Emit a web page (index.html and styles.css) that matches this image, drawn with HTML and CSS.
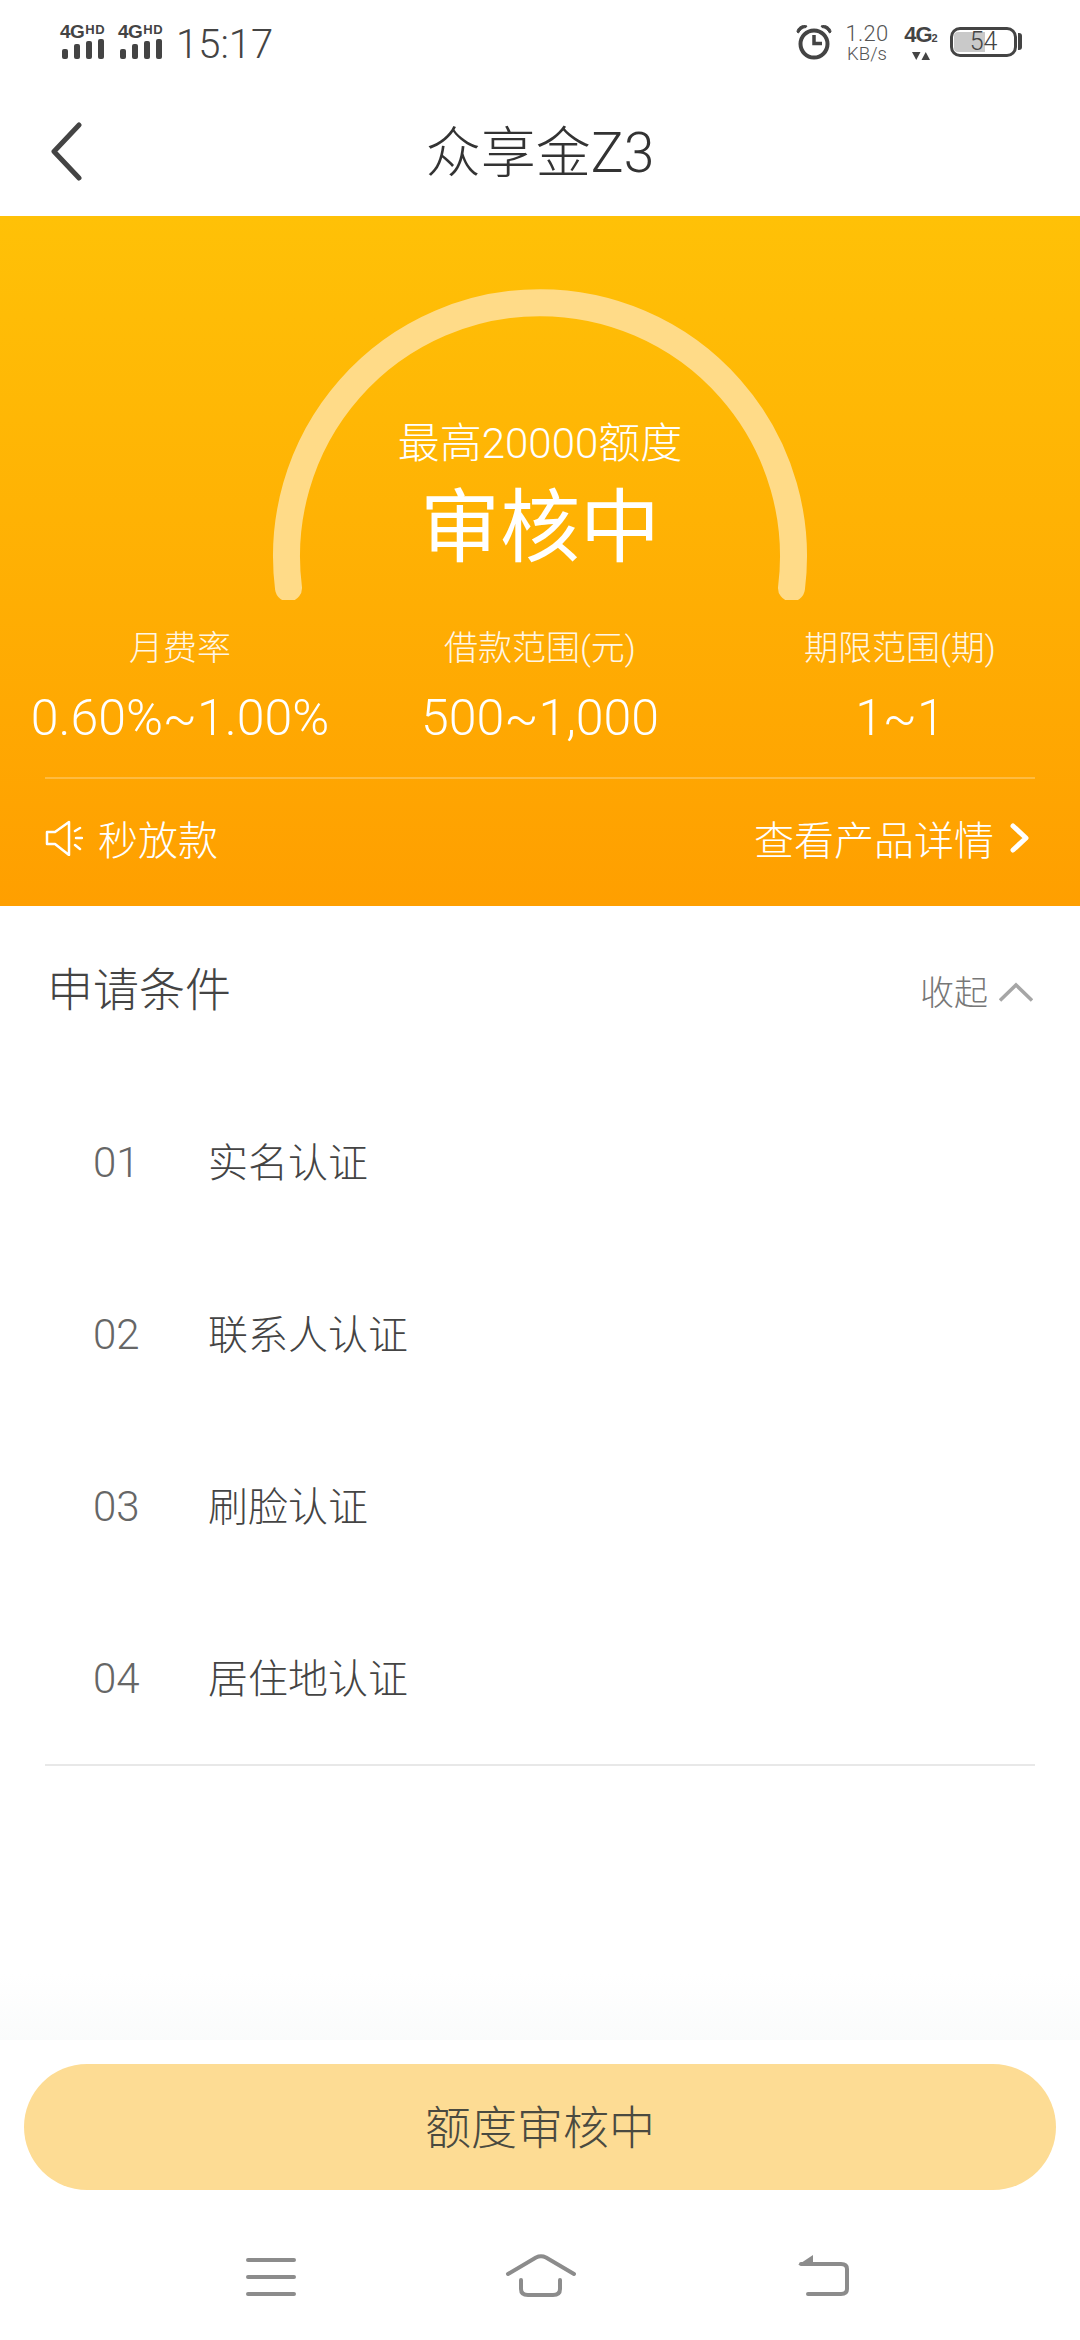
FILE: index.html
```html
<!DOCTYPE html>
<html lang="zh-CN">
<head>
    <meta charset="UTF-8">
    <meta name="viewport" content="width=device-width, initial-scale=1.0">
    <title>众享金Z3</title>
    <link rel="stylesheet" href="styles.css">
</head>
<body>
    <div class="status-bar">
        <div class="status-left">
            <div class="sim">
                <div class="sim-label">4G<small>HD</small></div>
                <div class="bars"><i class="b1"></i><i class="b2"></i><i class="b3"></i><i class="b4"></i></div>
            </div>
            <div class="sim">
                <div class="sim-label">4G<small>HD</small></div>
                <div class="bars"><i class="b1"></i><i class="b2"></i><i class="b3"></i><i class="b4"></i></div>
            </div>
            <span class="clock">15:17</span>
        </div>
        <div class="status-right">
            <svg class="alarm" width="36" height="36" viewBox="0 0 36 36">
                <circle cx="18" cy="20" r="13.500" fill="none" stroke="#444" stroke-width="4"/>
                <path d="M18 11v8.500h8" fill="none" stroke="#444" stroke-width="3.500"/>
                <path d="M1 8C1 4 6 0 11 2L10 3.500C7 3.500 4 6 2.500 9zM35 8C35 4 30 0 25 2L26 3.500C29 3.500 32 6 33.500 9z" fill="#444" stroke="#444"/>
            </svg>
            <div class="speed"><span>1.20</span><small>KB/s</small></div>
            <div class="net">
                <div class="net-label">4G<small>2</small></div>
                <svg width="18" height="8" viewBox="0 0 18 8"><path d="M0 0h8.500L4.250 8zM9.500 8h8.500L13.750 0z" fill="#444"/></svg>
            </div>
            <div class="battery">
                <div class="battery-fill"></div>
                <span>54</span>
            </div>
        </div>
    </div>

    <header class="nav">
        <svg class="nav-back" width="32" height="60" viewBox="0 0 32 60">
            <path d="M29 3L4 29.500L29 56" fill="none" stroke="#444" stroke-width="5" stroke-linecap="round" stroke-linejoin="round"/>
        </svg>
        <h1>众享金Z3</h1>
    </header>

    <section class="hero">
        <div class="gauge">
            <svg class="gauge-arc" width="540" height="312" viewBox="0 0 540 312">
                <path d="M18.500 300A253.500 253.500 0 1 1 521.500 300" fill="none" stroke="#ffdb88" stroke-width="27" stroke-linecap="round"/>
            </svg>
            <div class="gauge-text">
                <div class="gauge-limit">最高20000额度</div>
                <div class="gauge-state">审核中</div>
            </div>
        </div>
        <div class="stats">
            <div class="stat">
                <div class="stat-label">月费率</div>
                <div class="stat-value">0.60%~1.00%</div>
            </div>
            <div class="stat">
                <div class="stat-label">借款范围(元)</div>
                <div class="stat-value">500~1,000</div>
            </div>
            <div class="stat">
                <div class="stat-label">期限范围(期)</div>
                <div class="stat-value">1~1</div>
            </div>
        </div>
        <div class="hero-foot">
            <div class="hero-tag">
                <svg width="38" height="36" viewBox="0 0 38 36" fill="none" stroke="#fff" stroke-width="2.500" stroke-linecap="round" stroke-linejoin="round">
                    <path d="M2 12h8L24 2v33L10 24H2z"/>
                    <path d="M30 11l5-3M31 18h6M30 25l5 4"/>
                </svg>
                <span>秒放款</span>
            </div>
            <div class="hero-link">
                <span>查看产品详情</span>
                <svg width="20" height="30" viewBox="0 0 20 30"><path d="M3 3l13 12L3 27" fill="none" stroke="#fff" stroke-width="5" stroke-linecap="round" stroke-linejoin="round"/></svg>
            </div>
        </div>
    </section>

    <section class="conditions">
        <div class="cond-head">
            <h2>申请条件</h2>
            <div class="cond-toggle">
                <span>收起</span>
                <svg width="34" height="20" viewBox="0 0 34 20"><path d="M1 18.500L17 3l16 15.500" fill="none" stroke="#a6a6a6" stroke-width="3.500"/></svg>
            </div>
        </div>
        <ul class="cond-list">
            <li><span class="cond-no">01</span><span>实名认证</span></li>
            <li><span class="cond-no">02</span><span>联系人认证</span></li>
            <li><span class="cond-no">03</span><span>刷脸认证</span></li>
            <li><span class="cond-no">04</span><span>居住地认证</span></li>
        </ul>
    </section>

    <div class="bottom">
        <div class="apply">额度审核中</div>
        <nav class="sys-nav">
            <svg width="52" height="40" viewBox="0 0 52 40" fill="none" stroke="#8c8c8c" stroke-width="4" stroke-linecap="round">
                <path d="M3 3h46M3 20h46M3 37h46"/>
            </svg>
            <svg width="72" height="46" viewBox="0 0 72 46" fill="none" stroke="#8c8c8c" stroke-width="4" stroke-linecap="round" stroke-linejoin="round">
                <path d="M3 20L31 3.500Q36 1 41 3.500L69 20"/>
                <path d="M16 26v9q0 6 7 6h25q7 0 7-6V26"/>
            </svg>
            <svg width="52" height="44" viewBox="0 0 52 44" fill="none" stroke="#8c8c8c" stroke-width="4" stroke-linecap="round" stroke-linejoin="round">
                <path d="M3 9H43q6 0 6 5V34q0 5-6 5H10"/>
                <path d="M15 0V10H0z" fill="#8c8c8c" stroke="none"/>
            </svg>
        </nav>
    </div>
</body>
</html>
```

FILE: styles.css
```css
* {
    box-sizing: border-box;
}
html, body {
    margin: 0;
    padding: 0;
}
body {
    width: 1080px;
    height: 2340px;
    position: relative;
    overflow: hidden;
    background: #fff;
    color: #444;
    font-family: Roboto, "Noto Sans CJK SC", sans-serif;
    font-weight: 300;
}

/* status bar */
.status-bar {
    height: 84px;
    padding: 22px 63px 0 60px;
    display: flex;
    justify-content: space-between;
}
.status-left, .status-right {
    display: flex;
    align-items: flex-start;
}
.sim {
    width: 58px;
}
.sim-label {
    font-family: "Liberation Sans", sans-serif;
    font-weight: 700;
    font-size: 19px;
    line-height: 16px;
    letter-spacing: -0.5px;
    color: #444;
}
.sim-label small {
    font-size: 13px;
    vertical-align: 4px;
    margin-left: 1px;
    letter-spacing: 0.4px;
}
.bars {
    display: flex;
    align-items: flex-end;
    gap: 6px;
    height: 20px;
    margin: -1px 0 0 2px;
}
.bars i {
    display: block;
    width: 6px;
    background: #444;
    border-radius: 2px;
}
.bars .b1 { height: 10px; }
.bars .b2 { height: 15px; }
.bars .b3 { height: 18px; }
.bars .b4 { height: 20px; }
.clock {
    font-size: 40px;
    line-height: 44px;
    margin-top: 1px;
    color: #444;
}
.alarm {
    margin-top: 2px;
}
.speed {
    display: flex;
    flex-direction: column;
    align-items: center;
    width: 46px;
    margin-left: 12px;
    color: #555;
}
.speed span {
    font-size: 22px;
    line-height: 24px;
    letter-spacing: 0.3px;
}
.speed small {
    font-size: 18.500px;
    line-height: 16px;
}
.net {
    display: flex;
    flex-direction: column;
    align-items: center;
    width: 34px;
    margin: 1px 0 0 14px;
}
.net-label {
    font-family: "Liberation Sans", sans-serif;
    font-weight: 700;
    font-size: 22px;
    line-height: 24px;
    letter-spacing: -1px;
    color: #444;
}
.net-label small {
    font-size: 11px;
    letter-spacing: 0;
}
.net svg {
    display: block;
    margin-top: 2px;
}
.battery {
    position: relative;
    width: 67px;
    height: 30px;
    margin: 5px 0 0 12px;
    border: 3px solid #444;
    border-radius: 10px;
    text-align: center;
    font-size: 25px;
    line-height: 24px;
    color: #444;
}
.battery::after {
    content: "";
    position: absolute;
    right: -8px;
    top: 3px;
    width: 4px;
    height: 17px;
    background: #444;
    border-radius: 0 3px 3px 0;
}
.battery span {
    position: relative;
}
.battery-fill {
    position: absolute;
    left: 1px;
    top: 2px;
    bottom: 2px;
    width: 31px;
    background: #c9c9c9;
    border-radius: 4px 0 0 4px;
}

/* title */
.nav {
    position: relative;
    height: 132px;
    padding-bottom: 4px;
    display: flex;
    align-items: center;
    justify-content: center;
}
.nav-back {
    position: absolute;
    left: 50px;
    top: 38px;
}
.nav h1 {
    margin: 0;
    font-size: 55px;
    font-weight: 300;
    color: #333;
}

/* orange block */
.hero {
    height: 690px;
    background: linear-gradient(#ffc107, #ff9f00);
    color: #fff;
}
.gauge {
    position: relative;
    height: 396px;
    padding-top: 72px;
    display: flex;
    justify-content: center;
}
.gauge-arc {
    display: block;
}
.gauge-text {
    position: absolute;
    left: 0;
    right: 0;
    top: 205px;
    text-align: center;
}
.gauge-limit {
    font-size: 42px;
    line-height: 46px;
}
.gauge-state {
    font-size: 80px;
    line-height: 100px;
    margin-top: 11px;
    font-weight: 400;
}
.stats {
    display: flex;
    height: 165px;
}
.stat {
    flex: 1;
    text-align: center;
    margin-top: 16px;
}
.stat:first-child {
    flex: 0 0 360px;
}
.stat:nth-child(2) {
    flex: 0 0 360px;
}
.stat-label {
    font-size: 34px;
    line-height: 40px;
    opacity: 0.9;
}
.stat-value {
    font-size: 50px;
    line-height: 60px;
    margin-top: 20px;
}
.hero-foot {
    margin: 0 45px;
    height: 129px;
    border-top: 2px solid rgba(255, 255, 255, 0.25);
    display: flex;
    justify-content: space-between;
    align-items: center;
    padding: 0 5px 10px 0;
    font-size: 40px;
}
.hero-tag, .hero-link {
    display: flex;
    align-items: center;
    gap: 15px;
}
.hero-link {
    gap: 16px;
}

/* conditions */
.conditions {
    padding: 0 45px;
}
.cond-head {
    height: 168px;
    padding: 0 2px 8px 2px;
    display: flex;
    justify-content: space-between;
    align-items: center;
}
.cond-head h2 {
    margin: 0;
    font-size: 46px;
    font-weight: 300;
    color: #444;
}
.cond-toggle {
    display: flex;
    align-items: center;
    gap: 11px;
    margin-top: 8px;
    font-size: 34px;
    color: #777;
}
.cond-toggle svg {
    margin-top: 4px;
}
.cond-list {
    list-style: none;
    margin: 0;
    padding: 0 0 2px;
    border-bottom: 2px solid #e8e8e8;
}
.cond-list li {
    height: 172px;
    display: flex;
    align-items: center;
    padding-left: 48px;
    font-size: 40px;
    color: #444;
}
.cond-no {
    width: 115px;
    padding-top: 5px;
    font-size: 42px;
    color: #666;
}

/* bottom bar */
.bottom {
    position: absolute;
    left: 0;
    right: 0;
    bottom: 0;
    height: 300px;
    padding-top: 24px;
    background: #fff;
}
.bottom::before {
    content: "";
    position: absolute;
    left: 0;
    right: 0;
    top: -66px;
    height: 66px;
    background: linear-gradient(rgba(250, 251, 251, 0), #fafbfb);
}
.apply {
    height: 126px;
    margin: 0 24px;
    padding-bottom: 7px;
    border-radius: 63px;
    background: #fddc94;
    display: flex;
    align-items: center;
    justify-content: center;
    font-size: 46px;
    color: #4a4a40;
}
.sys-nav {
    margin-top: 64px;
    display: flex;
    align-items: center;
    padding-left: 245px;
}
.sys-nav svg:nth-child(2) {
    margin-left: 208px;
}
.sys-nav svg:nth-child(3) {
    margin-left: 221px;
}
```
